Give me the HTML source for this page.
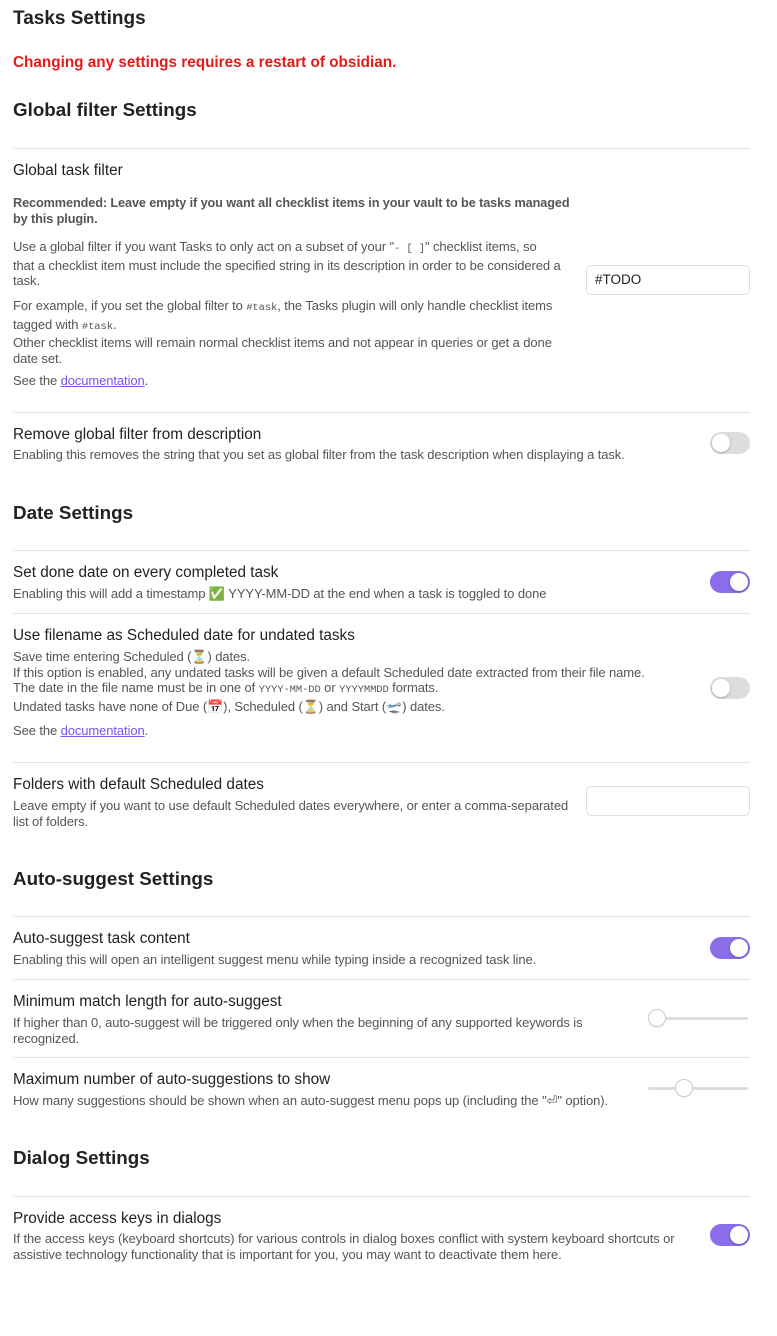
<!DOCTYPE html><html><head><style>
body{margin:0;background:#fff;font-family:"Liberation Sans",sans-serif;color:#222;width:777px;height:1336px;position:relative;overflow:hidden}
.a{position:absolute;left:13px;white-space:nowrap}
.h{font-size:18.8px;font-weight:bold}
.t{font-size:15.3px;color:#222}
.d{font-size:13px;color:#555;line-height:15.5px;letter-spacing:-0.1px}
.hr{position:absolute;left:13px;width:737px;height:1px;background:#e3e3e3}
.tg{position:absolute;left:710px;width:40px;height:22px;border-radius:11px;background:#ddd}
.tg::after{content:"";position:absolute;top:2px;left:2px;width:18px;height:18px;border-radius:50%;background:#fff;box-shadow:0 1px 2px rgba(0,0,0,.25)}
.tg.on{background:#8a6de9}.tg.on::after{left:20px}
.in{position:absolute;left:586px;width:164px;height:30px;border:1px solid #ddd;border-radius:5px;font-size:13.5px;line-height:28px;padding-left:8px;box-sizing:border-box;color:#222}
a{color:#7b52e8}
code{font-family:"Liberation Mono",monospace;font-size:10.5px}
.sl{position:absolute;height:3px;background:#ddd;border-radius:2px}
.kn{position:absolute;width:16px;height:16px;border-radius:50%;background:#fff;box-shadow:0 0 0 1px #ccc,0 1px 2px rgba(0,0,0,.2)}
</style></head><body>
<div class="a h" style="top:8px;font-size:19px">Tasks Settings</div>
<div class="a" style="top:54px;color:#e31b1b;font-weight:bold;font-size:15.3px">Changing any settings requires a restart of obsidian.</div>
<div class="a h" style="top:99px">Global filter Settings</div>
<div class="hr" style="top:148px"></div>
<div class="a t" style="top:162px">Global task filter</div>
<div class="a d" style="top:196px;font-weight:bold;color:#555;font-size:12.7px">Recommended: Leave empty if you want all checklist items in your vault to be tasks managed<br>by this plugin.</div>
<div class="a d" style="top:239px">Use a global filter if you want Tasks to only act on a subset of your "<code>- [ ]</code>" checklist items, so<br>that a checklist item must include the specified string in its description in order to be considered a<br>task.</div>
<div class="a d" style="top:298px">For example, if you set the global filter to <code>#task</code>, the Tasks plugin will only handle checklist items<br>tagged with <code>#task</code>.<br>Other checklist items will remain normal checklist items and not appear in queries or get a done<br>date set.</div>
<div class="a d" style="top:373px">See the <a href="#">documentation</a>.</div>
<div class="in" style="top:265px">#TODO</div>
<div class="hr" style="top:412px"></div>
<div class="a t" style="top:426px">Remove global filter from description</div>
<div class="a d" style="top:447px">Enabling this removes the string that you set as global filter from the task description when displaying a task.</div>
<div class="tg" style="top:432px"></div>
<div class="a h" style="top:502px">Date Settings</div>
<div class="hr" style="top:550px"></div>
<div class="a t" style="top:564px">Set done date on every completed task</div>
<div class="a d" style="top:586px">Enabling this will add a timestamp ✅ YYYY-MM-DD at the end when a task is toggled to done</div>
<div class="tg on" style="top:571px"></div>
<div class="hr" style="top:613px"></div>
<div class="a t" style="top:627px">Use filename as Scheduled date for undated tasks</div>
<div class="a d" style="top:649px">Save time entering Scheduled (⏳) dates.<br>If this option is enabled, any undated tasks will be given a default Scheduled date extracted from their file name.<br>The date in the file name must be in one of <code>YYYY-MM-DD</code> or <code>YYYYMMDD</code> formats.<br>Undated tasks have none of Due (📅), Scheduled (⏳) and Start (🛫) dates.</div>
<div class="a d" style="top:723px">See the <a href="#">documentation</a>.</div>
<div class="tg" style="top:677px"></div>
<div class="hr" style="top:762px"></div>
<div class="a t" style="top:776px">Folders with default Scheduled dates</div>
<div class="a d" style="top:798px">Leave empty if you want to use default Scheduled dates everywhere, or enter a comma-separated<br>list of folders.</div>
<div class="in" style="top:786px"></div>
<div class="a h" style="top:868px">Auto-suggest Settings</div>
<div class="hr" style="top:916px"></div>
<div class="a t" style="top:930px">Auto-suggest task content</div>
<div class="a d" style="top:952px">Enabling this will open an intelligent suggest menu while typing inside a recognized task line.</div>
<div class="tg on" style="top:937px"></div>
<div class="hr" style="top:979px"></div>
<div class="a t" style="top:993px">Minimum match length for auto-suggest</div>
<div class="a d" style="top:1015px">If higher than 0, auto-suggest will be triggered only when the beginning of any supported keywords is<br>recognized.</div>
<div class="sl" style="left:648px;width:100px;top:1017px"></div><div class="kn" style="left:649px;top:1010px"></div>
<div class="hr" style="top:1057px"></div>
<div class="a t" style="top:1071px">Maximum number of auto-suggestions to show</div>
<div class="a d" style="top:1093px">How many suggestions should be shown when an auto-suggest menu pops up (including the "⏎" option).</div>
<div class="sl" style="left:648px;width:100px;top:1087px"></div><div class="kn" style="left:676px;top:1080px"></div>
<div class="a h" style="top:1147px">Dialog Settings</div>
<div class="hr" style="top:1196px"></div>
<div class="a t" style="top:1210px">Provide access keys in dialogs</div>
<div class="a d" style="top:1231px">If the access keys (keyboard shortcuts) for various controls in dialog boxes conflict with system keyboard shortcuts or<br>assistive technology functionality that is important for you, you may want to deactivate them here.</div>
<div class="tg on" style="top:1224px"></div>
</body></html>
